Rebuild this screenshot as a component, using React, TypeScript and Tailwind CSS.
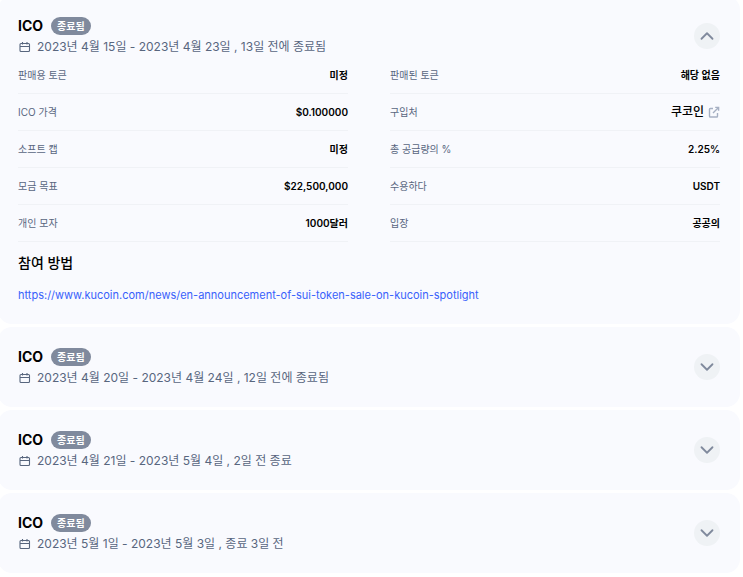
import { useState } from 'react';
import { ChevronDown, ChevronUp } from 'lucide-react';

interface Detail {
  label: string;
  value: string;
  href?: string;
}

interface Sale {
  id: number;
  name: string;
  status: string;
  period: string;
  details?: Detail[];
  participateUrl?: string;
}

const KUCOIN_URL = 'https://www.kucoin.com/news/en-announcement-of-sui-token-sale-on-kucoin-spotlight';

const sales: Sale[] = [
  {
    id: 1,
    name: 'ICO',
    status: '종료됨',
    period: '2023년 4월 15일 - 2023년 4월 23일 , 13일 전에 종료됨',
    details: [
      { label: '판매용 토큰', value: '미정' },
      { label: '판매된 토큰', value: '해당 없음' },
      { label: 'ICO 가격', value: '$0.100000' },
      { label: '구입처', value: '쿠코인', href: 'https://www.kucoin.com' },
      { label: '소프트 캡', value: '미정' },
      { label: '총 공급량의 %', value: '2.25%' },
      { label: '모금 목표', value: '$22,500,000' },
      { label: '수용하다', value: 'USDT' },
      { label: '개인 모자', value: '1000달러' },
      { label: '입장', value: '공공의' },
    ],
    participateUrl: KUCOIN_URL,
  },
  { id: 2, name: 'ICO', status: '종료됨', period: '2023년 4월 20일 - 2023년 4월 24일 , 12일 전에 종료됨' },
  { id: 3, name: 'ICO', status: '종료됨', period: '2023년 4월 21일 - 2023년 5월 4일 , 2일 전 종료' },
  { id: 4, name: 'ICO', status: '종료됨', period: '2023년 5월 1일 - 2023년 5월 3일 , 종료 3일 전' },
];

function CalendarIcon() {
  return (
    <svg className="w-[13px] h-[13px] shrink-0" viewBox="0 0 13 13" fill="none" stroke="currentColor" aria-hidden="true">
      <rect x="2" y="2.5" width="9.5" height="8" rx="1" strokeWidth="1.1" />
      <path d="M2 5.5h9.5M4.5 1v2.5M9 1v2.5" strokeWidth="1.1" />
    </svg>
  );
}

function ExternalIcon() {
  return (
    <svg className="w-3 h-3 shrink-0 text-[#a6b0c3]" viewBox="0 0 12 12" fill="none" stroke="currentColor" strokeWidth="1.4" aria-hidden="true">
      <path d="M5 2.5H2.3a.8.8 0 0 0-.8.8v6.9c0 .4.4.8.8.8h6.4c.5 0 .8-.4.8-.8V7M5 7l5.5-5.5M7.2 1.4h3.4v3.4" />
    </svg>
  );
}

function DetailRow({ label, value, href }: Detail) {
  return (
    <div className="flex items-center justify-between h-[37px] border-b border-[#f0f2f6]">
      <dt className="text-[10px] text-[#58667e]">{label}</dt>
      <dd className="text-[10px] font-semibold text-black">
        {href ? (
          <a href={href} className="flex items-center gap-1 text-xs font-medium">
            {value}
            <ExternalIcon />
          </a>
        ) : (
          value
        )}
      </dd>
    </div>
  );
}

function SaleCard({ sale, defaultOpen }: { sale: Sale; defaultOpen: boolean }) {
  const [open, setOpen] = useState(defaultOpen);

  return (
    <section className="rounded-[14px] bg-[#f9fafe] px-5 py-[19px]">
      <div className="flex items-center justify-between">
        <div>
          <div className="flex items-center gap-2 h-[22px]">
            <h2 className="text-sm font-bold text-black">{sale.name}</h2>
            <span className="flex items-center h-[18px] px-1.5 rounded-full bg-[#808a9d] text-[10px] font-semibold text-white">
              {sale.status}
            </span>
          </div>
          <p className="flex items-center gap-1.5 h-5 text-xs text-[#58667e]">
            <CalendarIcon />
            {sale.period}
          </p>
        </div>
        <button
          type="button"
          aria-expanded={open}
          aria-label={sale.period}
          onClick={() => setOpen(!open)}
          className="flex items-center justify-center w-[26px] h-[26px] rounded-full bg-[#eff2f5] text-[#808a9d]"
        >
          {open ? <ChevronUp className="w-[22px] h-[22px]" /> : <ChevronDown className="w-[22px] h-[22px]" />}
        </button>
      </div>

      {open && sale.details && (
        <dl className="grid grid-cols-2 gap-x-[42px]">
          {sale.details.map((detail) => (
            <DetailRow key={detail.label} {...detail} />
          ))}
        </dl>
      )}

      {open && sale.participateUrl && (
        <div className="flex flex-col items-start gap-3 mt-[11px]">
          <h3 className="text-sm font-medium text-black">참여 방법</h3>
          <a href={sale.participateUrl} className="text-[11px] leading-5 text-[#3861fb]">
            {sale.participateUrl}
          </a>
        </div>
      )}
    </section>
  );
}

export default function App() {
  return (
    <main className="-mt-1 -ml-0.5 pr-[3px] flex flex-col gap-[3px] bg-white font-['Inter','Noto_Sans_CJK_KR',sans-serif]">
      {sales.map((sale, i) => (
        <SaleCard key={sale.id} sale={sale} defaultOpen={i === 0} />
      ))}
    </main>
  );
}
